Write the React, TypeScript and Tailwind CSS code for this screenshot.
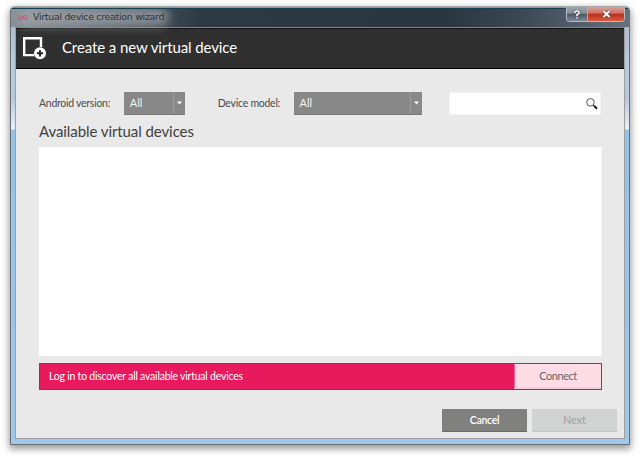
import React from "react";

function SelectBox({ className }: { className: string }) {
  return (
    <div className={`flex h-[23px] items-stretch border-b border-[#777] bg-[#888] text-[11px] text-[#f4f4f4] ${className}`}>
      <span className="flex flex-1 items-center pl-[6px] pt-px">All</span>
      <span className="flex w-[12px] items-center justify-center border-l border-[#9a9a9a]">
        <svg width="5" height="4" viewBox="0 0 5 4"><path d="M0 0.5h5L2.5 3.5z" fill="#fff" /></svg>
      </span>
    </div>
  );
}

function TitleBar() {
  return (
    <div className="relative flex h-[20px] bg-[linear-gradient(90deg,#8a9096_0,#2c3943_190px,#2a3640_440px,#3c4853_510px,#65717d_620px)]">
      <div className="absolute left-[6px] top-[1px] h-[18px] w-[152px] rounded-full bg-[#a4a8ac]/70 blur-[5px]" />
      <div className="absolute inset-x-0 top-0 h-[2px] bg-[linear-gradient(#8f989b_50%,#173e52_50%)]" />
      <div className="relative flex items-center pl-[7px]">
        <svg width="10" height="7" viewBox="0 0 10 7">
          <circle cx="2.5" cy="3.7" r="1.9" fill="none" stroke="#c84c70" strokeWidth="0.9" />
          <path d="M4.2 4.6 6 2.8" stroke="#c84c70" strokeWidth="0.9" />
          <circle cx="7.5" cy="3.3" r="1.9" fill="none" stroke="#c84c70" strokeWidth="0.9" />
        </svg>
        <span className="whitespace-nowrap pl-[5px] font-['DejaVu_Sans',sans-serif] text-[9.5px] leading-none tracking-[-0.33px] text-[#303438]">
          Virtual device creation wizard
        </span>
      </div>
      <div className="relative ml-auto mr-[4px] flex h-[15px] w-[59px] overflow-hidden rounded-b-[4px] border border-t-0 border-[#b4bcc3]">
        <div className="flex w-[21px] items-center justify-center border-r border-[#aab2b9] bg-[linear-gradient(#9da6af_0,#828c96_45%,#4b5661_50%,#7d8791_100%)]">
          <svg width="8" height="9" viewBox="0 0 8 9" fill="none">
            <path d="M1.6 3Q1.6 1 4 1Q6.3 1 6.3 2.7Q6.3 3.8 4 4.5V6M4 7.1v1.4" stroke="#404852" strokeWidth="2.8" />
            <path d="M1.6 3Q1.6 1 4 1Q6.3 1 6.3 2.7Q6.3 3.8 4 4.5V6M4 7.1v1.4" stroke="#fff" strokeWidth="1.5" />
          </svg>
        </div>
        <div className="flex flex-1 items-center justify-center bg-[linear-gradient(#dda099_0,#cf6f62_45%,#b52e1b_50%,#d95b40_100%)]">
          <svg width="9" height="8" viewBox="0 0 9 8">
            <path d="M1.5 1l6 6M7.5 1l-6 6" stroke="#53404a" strokeWidth="3.4" />
            <path d="M1.5 1l6 6M7.5 1l-6 6" stroke="#fff" strokeWidth="2" />
          </svg>
        </div>
      </div>
    </div>
  );
}

function Header() {
  return (
    <div className="flex h-[41px] items-center border-b border-t border-b-[#050505] border-t-[#111] bg-[#303030]">
      <svg width="26" height="26" viewBox="0 0 26 26" className="ml-[6px]" fill="none">
        <path d="M12 19.1H2.2V2.2H19V11" stroke="#fff" strokeWidth="2.4" />
        <circle cx="18" cy="17.3" r="6" fill="#fff" />
        <path d="M18 14.2v6.2M14.9 17.3h6.2" stroke="#252525" strokeWidth="2" />
      </svg>
      <h1 className="-mt-[3px] ml-[14px] whitespace-nowrap text-[15px] leading-none tracking-[-0.1px] text-white">Create a new virtual device</h1>
    </div>
  );
}

export default function App() {
  return (
    <div className="h-[460px] w-[640px] overflow-hidden bg-white pl-[10px] pt-[6px] font-['Lato',sans-serif]">
      <div className="h-[439px] w-[620px] overflow-hidden rounded-t-[5px] border border-[#6b7074] border-t-[#a5aaa8] bg-[linear-gradient(#a9b8c7_0,#b5cce0_60px,#b5c8dc_90px,#e8f1f8_122px,#95c2e8_123px,#9fc8eb_100%)] shadow-[0_3px_7px_1px_rgba(0,0,0,0.4)]">
        <TitleBar />
        <div className="mx-[4px] h-[412px] border border-[#9b9fa2] border-t-[#7e878c] bg-[#e9e9e9]">
          <Header />
          <div className="px-[23px] pt-[23px] text-[#4b4b4b]">
            <div className="flex h-[23px] items-center text-[10.5px]">
              <span className="w-[85px] whitespace-nowrap tracking-[-0.27px]">Android version:</span>
              <SelectBox className="w-[61px]" />
              <span className="ml-[33px] w-[76px] whitespace-nowrap tracking-[-0.25px]">Device model:</span>
              <SelectBox className="w-[129px]" />
              <div className="ml-[27px] flex h-[23px] w-[152px] items-center justify-end border border-[#f3f3f3] bg-white pr-[2px]">
                <svg width="12" height="12" viewBox="0 0 12 12" fill="none">
                  <circle cx="4.5" cy="4.3" r="3.8" stroke="#555" strokeWidth="1" />
                  <path d="M7.2 7l1.5 1.5" stroke="#333" strokeWidth="1.2" />
                  <path d="M8.3 8l2.7 2.7" stroke="#222" strokeWidth="2.2" />
                </svg>
              </div>
            </div>
            <h2 className="mt-[8px] whitespace-nowrap text-[15px] leading-[16px] tracking-[-0.08px] text-[#404040]">Available virtual devices</h2>
            <div className="mt-[8px] h-[209px] w-[563px] border-r border-r-[#f3f3f3] bg-white" />
            <div className="mt-[7px] flex h-[27px] w-[563px] bg-[#e80a50] p-px">
              <span className="flex flex-1 items-center bg-[#e8195d] pl-[9px] pt-px text-[10.5px] tracking-[-0.22px] text-white">Log in to discover all available virtual devices</span>
              <button className="w-[87px] border-b-2 border-l border-b-[#f7cfdb] border-l-[#f06292] bg-[#fddce6] pt-[2px] text-[11px] tracking-[-0.45px] text-[#666]">Connect</button>
            </div>
            <div className="-mr-[16px] mt-[19px] flex justify-end gap-[5px] text-[10.5px]">
              <button className="h-[23px] w-[85px] border-b border-[#696969] bg-[#80807e] pt-px font-semibold tracking-[-0.3px] text-white">Cancel</button>
              <button className="h-[23px] w-[85px] border-b border-[#c4c5c4] bg-[#d1d3d2] pt-px text-[#9c9e9d]">Next</button>
            </div>
          </div>
        </div>
      </div>
    </div>
  );
}
